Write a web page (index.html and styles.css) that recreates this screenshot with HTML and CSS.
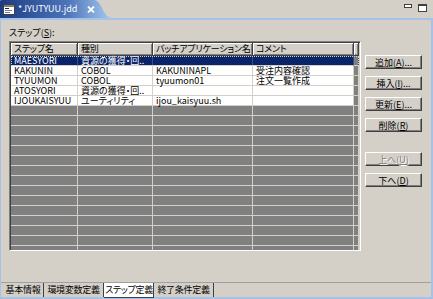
FILE: index.html
```html
<!DOCTYPE html>
<html lang="ja">
<head>
  <meta charset="UTF-8">
  <title>JYUTYUU.jdd</title>
  <link rel="stylesheet" href="styles.css">
</head>
<body>
  <div class="window">
    <!-- Editor title bar -->
    <div class="titlebar">
      <div class="doc-tab">
        <svg class="doc-icon" width="12" height="11" viewBox="0 0 12 11">
          <rect x="0.5" y="0.5" width="11" height="10" fill="#fff" stroke="#404040"/>
          <rect x="1" y="1" width="10" height="2" fill="#808080"/>
          <rect x="2" y="4" width="4" height="1" fill="#0a246a"/>
          <rect x="2" y="6" width="7" height="1" fill="#808080"/>
          <rect x="2" y="8" width="5" height="1" fill="#808080"/>
        </svg>
        <span class="doc-name">*JYUTYUU.jdd</span>
        <svg class="doc-close" width="8" height="7" viewBox="0 0 8 7">
          <path d="M1 0.5 L7 6.5 M7 0.5 L1 6.5" stroke="#fff" stroke-width="1.8"/>
        </svg>
      </div>
      <div class="win-controls">
        <span class="ctl-min"></span>
        <span class="ctl-max"></span>
      </div>
    </div>

    <!-- Editor page -->
    <div class="frame">
      <div class="page">
        <div class="label">ステップ(<u>S</u>):</div>
        <div class="content">
          <div class="grid">
            <div class="grid-row grid-head">
              <div class="hcell">ステップ名</div>
              <div class="hcell">種別</div>
              <div class="hcell">バッチアプリケーション名</div>
              <div class="hcell">コメント</div>
              <div class="hcell"></div>
            </div>
            <div class="grid-body">
              <div class="grid-row selected">
                <div class="cell">MAESYORI</div>
                <div class="cell">資源の獲得・回..</div>
                <div class="cell"></div>
                <div class="cell"></div>
                <div class="cell filler"></div>
              </div>
              <div class="grid-row">
                <div class="cell">KAKUNIN</div>
                <div class="cell">COBOL</div>
                <div class="cell">KAKUNINAPL</div>
                <div class="cell">受注内容確認</div>
                <div class="cell filler"></div>
              </div>
              <div class="grid-row">
                <div class="cell">TYUUMON</div>
                <div class="cell">COBOL</div>
                <div class="cell">tyuumon01</div>
                <div class="cell">注文一覧作成</div>
                <div class="cell filler"></div>
              </div>
              <div class="grid-row">
                <div class="cell">ATOSYORI</div>
                <div class="cell">資源の獲得・回..</div>
                <div class="cell"></div>
                <div class="cell"></div>
                <div class="cell filler"></div>
              </div>
              <div class="grid-row">
                <div class="cell">IJOUKAISYUU</div>
                <div class="cell">ユーティリティ</div>
                <div class="cell">ijou_kaisyuu.sh</div>
                <div class="cell"></div>
                <div class="cell filler"></div>
              </div>
              <div class="grid-row empty"><div class="cell"></div><div class="cell"></div><div class="cell"></div><div class="cell"></div><div class="cell filler"></div></div>
              <div class="grid-row empty"><div class="cell"></div><div class="cell"></div><div class="cell"></div><div class="cell"></div><div class="cell filler"></div></div>
              <div class="grid-row empty"><div class="cell"></div><div class="cell"></div><div class="cell"></div><div class="cell"></div><div class="cell filler"></div></div>
              <div class="grid-row empty"><div class="cell"></div><div class="cell"></div><div class="cell"></div><div class="cell"></div><div class="cell filler"></div></div>
              <div class="grid-row empty"><div class="cell"></div><div class="cell"></div><div class="cell"></div><div class="cell"></div><div class="cell filler"></div></div>
              <div class="grid-row empty"><div class="cell"></div><div class="cell"></div><div class="cell"></div><div class="cell"></div><div class="cell filler"></div></div>
              <div class="grid-row empty"><div class="cell"></div><div class="cell"></div><div class="cell"></div><div class="cell"></div><div class="cell filler"></div></div>
              <div class="grid-row empty"><div class="cell"></div><div class="cell"></div><div class="cell"></div><div class="cell"></div><div class="cell filler"></div></div>
              <div class="grid-row empty"><div class="cell"></div><div class="cell"></div><div class="cell"></div><div class="cell"></div><div class="cell filler"></div></div>
              <div class="grid-row empty"><div class="cell"></div><div class="cell"></div><div class="cell"></div><div class="cell"></div><div class="cell filler"></div></div>
              <div class="grid-row empty"><div class="cell"></div><div class="cell"></div><div class="cell"></div><div class="cell"></div><div class="cell filler"></div></div>
              <div class="grid-row empty"><div class="cell"></div><div class="cell"></div><div class="cell"></div><div class="cell"></div><div class="cell filler"></div></div>
              <div class="grid-row empty"><div class="cell"></div><div class="cell"></div><div class="cell"></div><div class="cell"></div><div class="cell filler"></div></div>
              <div class="grid-row empty"><div class="cell"></div><div class="cell"></div><div class="cell"></div><div class="cell"></div><div class="cell filler"></div></div>
              <div class="grid-row empty"><div class="cell"></div><div class="cell"></div><div class="cell"></div><div class="cell"></div><div class="cell filler"></div></div>
            </div>
          </div>

          <!-- Side buttons -->
          <div class="buttons">
            <button class="btn">追加(<u>A</u>)...</button>
            <button class="btn">挿入(<u>I</u>)...</button>
            <button class="btn">更新(<u>E</u>)...</button>
            <button class="btn">削除(<u>R</u>)</button>
            <button class="btn disabled gap">上へ(<u>U</u>)</button>
            <button class="btn">下へ(<u>D</u>)</button>
          </div>
        </div>
      </div>

      <!-- Page tabs -->
      <div class="tabs">
        <span class="tab t1">基本情報</span>
        <span class="tab t2">環境変数定義</span>
        <span class="tab t3 active">ステップ定義</span>
        <span class="tab t4">終了条件定義</span>
      </div>
    </div>
  </div>
</body>
</html>
```

FILE: styles.css
```css
/* Editor look: Windows classic + Eclipse */
* {
  box-sizing: border-box;
}

body {
  margin: 0;
  font-family: "Noto Sans CJK JP", sans-serif;
  font-size: 9px;
  font-feature-settings: "palt";
  color: #000;
  background: #d4d0c8;
}

u {
  text-underline-offset: 1px;
}

.window {
  width: 433px;
  height: 299px;
  display: flex;
  flex-direction: column;
  background: #d4d0c8;
}

/* Title bar */
.titlebar {
  height: 20px;
  display: flex;
  justify-content: space-between;
  border-bottom: 2px solid #a6c2e8;
}

.doc-tab {
  width: 112px;
  height: 18px;
  display: flex;
  align-items: center;
  padding-left: 3px;
  background: linear-gradient(to right, #1c3c84, #4c74b8 60%, #a6caf0);
  clip-path: path('M0 1 Q0 0 2 0 H94 C102 0 103 18 112 18 H0 Z');
}

.doc-icon {
  flex: none;
}

.doc-name {
  margin-left: 3px;
  color: #fff;
  line-height: 12px;
}

.doc-close {
  margin-left: 10px;
}

.win-controls {
  display: flex;
  align-items: flex-start;
  gap: 6px;
  padding: 4px 6px 0 0;
}

.ctl-min {
  width: 8px;
  height: 4px;
  background: #fff;
  border: 1px solid #404040;
}

.ctl-max {
  width: 9px;
  height: 8px;
  background: #fff;
  border: 1px solid #404040;
  border-top-width: 2px;
}

/* Frame around the page */
.frame {
  flex: 1;
  display: flex;
  flex-direction: column;
  border-left: 1px solid #a6c2e8;
  border-right: 2px solid #a6c2e8;
  border-bottom: 2px solid #a6c2e8;
}

.page {
  height: 262px;
  padding: 7px 0 0 8px;
}

.label {
  height: 12px;
  line-height: 12px;
  margin-bottom: 2px;
}

.content {
  display: flex;
  gap: 4px;
}

/* Table */
.grid {
  width: 352px;
  height: 210px;
  overflow: hidden;
  border: 1px solid;
  border-color: #808080 #fff #fff #808080;
  box-shadow: inset 1px 1px #404040, inset -1px -1px #d4d0c8;
  padding: 1px;
  background: #808080;
}

.grid-row {
  display: grid;
  grid-template-columns: 67px 75px 100px 101px 5px;
  height: 10px;
  background: #fff;
}

.grid-head {
  height: 13px;
  background: #d4d0c8;
}

.hcell {
  height: 13px;
  line-height: 12px;
  padding-left: 3px;
  white-space: nowrap;
  letter-spacing: -0.2px;
  border-right: 1px solid #404040;
  border-bottom: 1px solid #404040;
  box-shadow: inset 1px 1px #fff, inset -1px -1px #808080;
}

.cell {
  height: 10px;
  line-height: 10px;
  padding-left: 3px;
  white-space: nowrap;
  border-right: 1px solid #d4d0c8;
  border-bottom: 1px solid #d4d0c8;
}

.cell.filler {
  background: #808080;
}

.grid-row.empty {
  background: #808080;
}

.grid-row.selected {
  background: #0a246a;
  color: #fff;
  outline: 1px dotted #d4d0c8;
  outline-offset: -1px;
}

.grid-row.selected .cell {
  border-right-color: #3a4e86;
}

/* Side buttons */
.buttons {
  display: flex;
  flex-direction: column;
  gap: 7px;
  padding-top: 14px;
}

.btn {
  width: 57px;
  height: 14px;
  padding: 0;
  font: inherit;
  line-height: 11px;
  color: #000;
  background: #d4d0c8;
  border: 1px solid;
  border-color: #fff #404040 #404040 #fff;
  box-shadow: inset -1px -1px #808080;
}

.btn.gap {
  margin-top: 13px;
}

.btn.disabled {
  color: #808080;
  text-shadow: 1px 1px #fff;
}

/* Page tabs */
.tabs {
  flex: 1;
  display: flex;
  padding-left: 2px;
  border-top: 1px solid #a0a0a0;
}

.tab {
  height: 14px;
  line-height: 13px;
  text-align: center;
  white-space: nowrap;
  letter-spacing: -0.3px;
  border-right: 1px solid #404040;
}

.tab.t1 { width: 41px; }
.tab.t2 { width: 60px; }
.tab.t3 { width: 50px; }
.tab.t4 { width: 60px; }

.tab.active {
  background: #fff;
  border-left: 1px solid #fff;
  box-shadow: 0 1px #404040;
}
```
